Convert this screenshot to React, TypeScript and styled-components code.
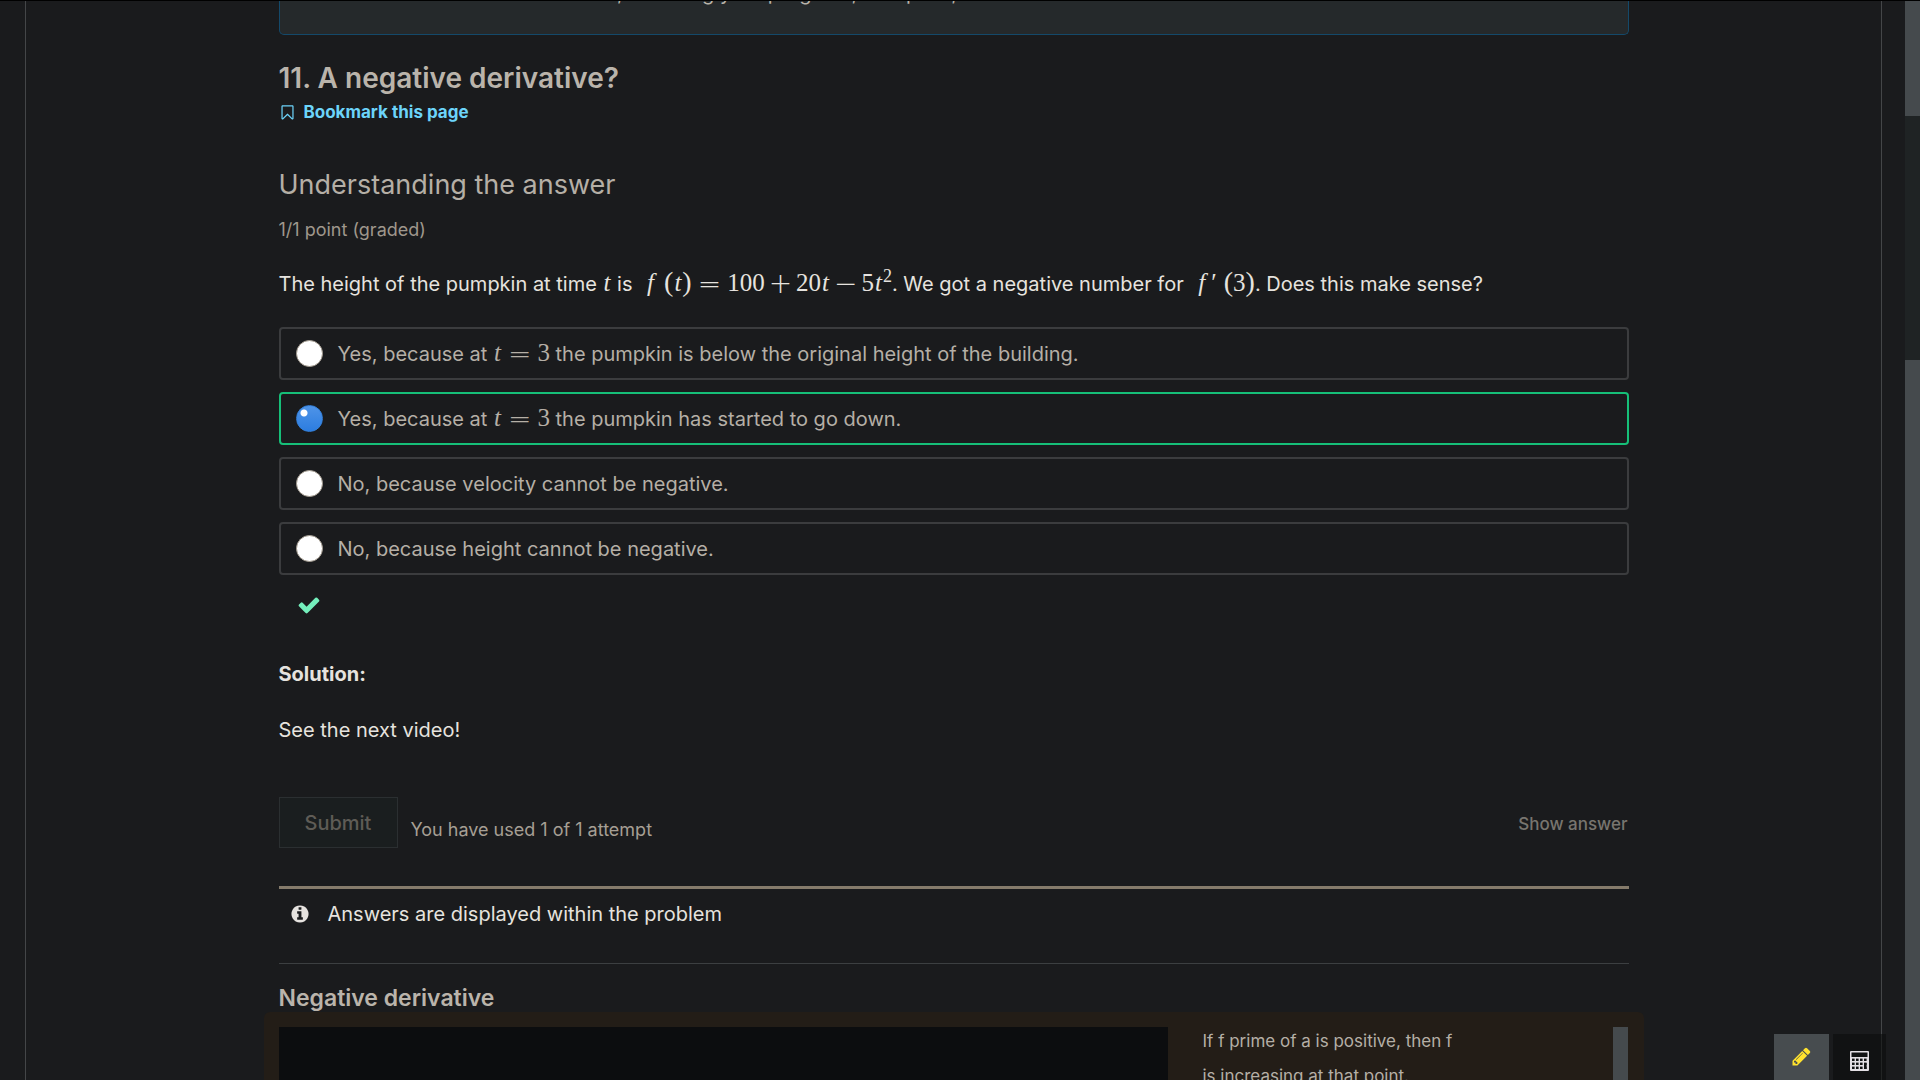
import React, { useState } from "react";
import styled, { createGlobalStyle } from "styled-components";

const Global = createGlobalStyle`
  * { box-sizing: border-box; }
  body {
    margin: 0;
    background: #1a1b1d;
    color: #e6e3df;
    font-family: Inter, "Liberation Sans", sans-serif;
    font-size: 20px;
    line-height: 28px;
  }
  h2, h3, h4, p, fieldset { margin: 0; padding: 0; border: 0; font-size: inherit; }
`;

const Window = styled.div`
  display: flex;
  height: 100vh;
  overflow: hidden;
  border-top: 1px solid #000;
`;

const Page = styled.div`
  flex: 1;
  min-width: 0;
  padding: 0 23px 0 25px;
`;

const Frame = styled.main`
  display: flex;
  justify-content: center;
  height: 100%;
  overflow: hidden;
  border: solid #444648;
  border-width: 0 1px;
`;

const Column = styled.div`
  width: 100%;
  max-width: 1350px;
`;

const Notice = styled.div`
  height: 34px;
  padding: 0 24px;
  overflow: hidden;
  display: flex;
  align-items: flex-start;
  border: 1px solid #14496a;
  border-top: 0;
  border-radius: 0 0 5px 5px;
  background: #25292b;
  color: #b9b3a9;
  p { margin-top: -20px; line-height: 24px; }
`;

const UnitTitle = styled.h2`
  margin-top: 25px;
  font-size: 28px;
  line-height: 36px;
  font-weight: 600;
  color: #bab4ab;
`;

const Bookmark = styled.button`
  display: flex;
  align-items: center;
  gap: 8px;
  margin: 3px 0 0;
  padding: 0;
  border: 0;
  background: none;
  color: #6cd4fa;
  font: 700 17px/26px Inter, sans-serif;
`;

const ProblemTitle = styled.h3`
  margin-top: 42px;
  font-size: 27px;
  line-height: 36px;
  font-weight: 400;
  color: #b5afa6;
`;

const Progress = styled.p`
  margin-top: 15px;
  font-size: 18px;
  line-height: 24px;
  color: #9f978c;
`;

const Question = styled.p`
  margin-top: 26px;
  line-height: 32px;
`;

const Maths = styled.span<{ $lead?: boolean }>`
  font: 25px/28px "Liberation Serif", serif;
  white-space: nowrap;
  margin-left: ${(p) => (p.$lead ? 9 : 0)}px;
  sup { font-size: 18px; line-height: 0; vertical-align: 9px; }
`;

const Var = styled.i`
  padding: 0 1px;
`;

const Op = styled.span<{ $binary?: boolean }>`
  margin: 0 ${(p) => (p.$binary ? 4 : 6)}px;
  font: 200 28px/0 "DejaVu Sans Light", "DejaVu Sans", sans-serif;
  vertical-align: -2px;
`;

const Paren = styled.span`
  font-size: 28px;
  line-height: 0;
`;

const Args = styled.span<{ $primed?: boolean }>`
  margin-left: ${(p) => (p.$primed ? 7 : 10)}px;
`;

const Prime = styled.span`
  margin-left: 6px;
`;

const Choices = styled.fieldset`
  display: flex;
  flex-direction: column;
  gap: 12px;
  margin-top: 27px;
`;

const Choice = styled.label<{ $correct?: boolean }>`
  display: flex;
  align-items: center;
  gap: 15px;
  height: 53px;
  padding: 0 15px;
  border: 2px solid ${(p) => (p.$correct ? "#16bf78" : "#3b3c3e")};
  border-radius: 4px;
  color: #b5afa6;
`;

const Radio = styled.input`
  appearance: none;
  width: 27px;
  height: 27px;
  margin: 0;
  border: 1px solid #a39b8f;
  border-radius: 50%;
  background: #fff;
  &:checked {
    border-color: #3381dc;
    background:
      radial-gradient(circle at 7px 7px, #fff 3px, transparent 4px),
      linear-gradient(#4f94e8, #2c7de0);
  }
`;

const Status = styled.div`
  display: flex;
  margin: 18px 0 0 18px;
  color: #74efbc;
`;

const Solution = styled.section`
  margin-top: 43px;
  p + p { margin-top: 28px; }
`;

const Actions = styled.div`
  display: flex;
  align-items: center;
  margin-top: 53px;
`;

const Submit = styled.button`
  height: 51px;
  padding: 0 26px 0 25px;
  border: 1px solid #2b2f31;
  background: #1a1e1f;
  color: #5f5c56;
  font: 500 20px/28px Inter, sans-serif;
`;

const Attempts = styled.span`
  margin: 14px 0 0 12px;
  font-size: 18px;
  line-height: 24px;
  color: #a69f94;
`;

const ShowAnswer = styled.button`
  margin-left: auto;
  padding: 2px 1px 0;
  border: 0;
  background: none;
  color: #78756f;
  font: 500 17px/28px Inter, sans-serif;
`;

const Message = styled.div`
  display: flex;
  align-items: center;
  gap: 18px;
  margin-top: 38px;
  padding: 11px 11px 35px;
  border-top: 3px solid #857b6b;
  border-bottom: 1px solid #3c3f41;
`;

const VideoTitle = styled.h3`
  margin-top: 20px;
  font-size: 23px;
  line-height: 28px;
  font-weight: 600;
  color: #bab4ab;
`;

const VideoBlock = styled.div`
  display: grid;
  grid-template-columns: 889fr 461fr;
  height: 600px;
  margin: 0 -15px;
  padding: 15px;
  border-radius: 6px;
  background: #231d17;
`;

const Player = styled.div`
  background: #0c0d0f;
`;

const Transcript = styled.div`
  display: flex;
  justify-content: space-between;
  padding-left: 35px;
  font-size: 17px;
  line-height: 35px;
  color: #b5afa6;
`;

const Lines = styled.div`
  max-width: 300px;
  margin-top: -3px;
`;

const Thumb = styled.div<{ $size: number }>`
  flex: ${(p) => p.$size};
  width: 15px;
  background: #454a4d;
`;

const Scrollbar = styled.div`
  display: flex;
  flex-direction: column;
  background: #1f2324;
`;

const TrackGap = styled.div`
  flex: 244;
`;

const TranscriptBar = styled(Scrollbar)`
  margin-right: 1px;
`;

const Tools = styled.div`
  position: fixed;
  right: 34px;
  bottom: 0;
  display: flex;
  gap: 4px;
`;

const Tool = styled.button<{ $active?: boolean }>`
  display: flex;
  justify-content: center;
  align-items: flex-start;
  width: ${(p) => (p.$active ? 55 : 53)}px;
  height: 46px;
  padding: ${(p) => (p.$active ? 12 : 17)}px 0 0;
  border: 0;
  background: ${(p) => (p.$active ? "#474c4f" : "rgba(12, 13, 14, 0.6)")};
  color: ${(p) => (p.$active ? "#ffe22e" : "#e6e3df")};
`;

const Icon = ({ d, size }: { d: string; size: number }) => (
  <svg width={size} height={size} viewBox="0 0 1792 1792" fill="currentColor" aria-hidden="true">
    <path d={d} />
  </svg>
);

const paths = {
  bookmark:
    "M1408 256h-1024v1242l423-406 89-85 89 85 423 406v-1242zm12-128q23 0 44 9 33 13 52.5 41t19.5 62v1289q0 34-19.5 62t-52.5 41q-19 8-44 8-48 0-83-32l-441-424-441 424q-36 33-83 33-23 0-44-9-33-13-52.5-41t-19.5-62v-1289q0-34 19.5-62t52.5-41q21-9 44-9h1048z",
  check:
    "M1671 566q0 40-28 68l-724 724-136 136q-28 28-68 28t-68-28l-136-136-362-362q-28-28-28-68t28-68l136-136q28-28 68-28t68 28l294 295 656-657q28-28 68-28t68 28l136 136q28 28 28 68z",
  info:
    "M1152 1376v-160q0-14-9-23t-23-9h-96v-512q0-14-9-23t-23-9h-320q-14 0-23 9t-9 23v160q0 14 9 23t23 9h96v320h-96q-14 0-23 9t-9 23v160q0 14 9 23t23 9h448q14 0 23-9t9-23zm-128-896v-160q0-14-9-23t-23-9h-192q-14 0-23 9t-9 23v160q0 14 9 23t23 9h192q14 0 23-9t9-23zm640 416q0 209-103 385.5t-279.5 279.5-385.5 103-385.5-103-279.5-279.5-103-385.5 103-385.5 279.5-279.5 385.5-103 385.5 103 279.5 279.5 103 385.5z",
  pencil:
    "M491 1536l91-91-235-235-91 91v107h128v128h107zm523-928q0-22-22-22-10 0-17 7l-542 542q-7 7-7 17 0 22 22 22 10 0 17-7l542-542q7-7 7-17zm-54-192l416 416-832 832h-416v-416zm683 96q0 53-37 90l-166 166-416-416 166-165q36-38 90-38 53 0 91 38l235 234q37 39 37 91z",
};

const Calculator = () => (
  <svg width="19" height="20" viewBox="0 0 19 20" aria-hidden="true">
    <rect width="19" height="20" rx="1" fill="#e3dfe4" />
    <rect x="1.5" y="1.5" width="16" height="4.5" fill="#121314" />
    {[8, 12, 16].map((y) =>
      [2, 6, 10, 14].map((x) => (
        <rect key={`${x}-${y}`} x={x} y={y - 0.4} width="2.6" height="2.4" fill="#121314" />
      ))
    )}
    <rect x="14" y="12" width="2.6" height="6" fill="#121314" />
  </svg>
);

const TEquals3 = () => (
  <Maths>
    <Var>t</Var>
    <Op>=</Op>3
  </Maths>
);

const choices = [
  { text: <>Yes, because at <TEquals3 /> the pumpkin is below the original height of the building.</> },
  { text: <>Yes, because at <TEquals3 /> the pumpkin has started to go down.</>, correct: true },
  { text: <>No, because velocity cannot be negative.</> },
  { text: <>No, because height cannot be negative.</> },
];

export default function App() {
  const [picked, setPicked] = useState(1);
  return (
    <Window>
      <Global />
      <Page>
        <Frame>
          <Column>
            <Notice>
              <p>You lose all access to this course, including your progress, on Apr 15, 2022.</p>
            </Notice>
            <UnitTitle>11. A negative derivative?</UnitTitle>
            <Bookmark type="button">
              <Icon d={paths.bookmark} size={17} />
              Bookmark this page
            </Bookmark>
            <ProblemTitle>Understanding the answer</ProblemTitle>
            <Progress>1/1 point (graded)</Progress>
            <Question>
              The height of the pumpkin at time <Maths><Var>t</Var></Maths> is{" "}
              <Maths $lead>
                <i>f</i>
                <Args><Paren>(</Paren><Var>t</Var><Paren>)</Paren></Args>
                <Op>=</Op>100<Op $binary>+</Op>20<Var>t</Var><Op $binary>−</Op>5<Var>t</Var><sup>2</sup>
              </Maths>
              . We got a negative number for{" "}
              <Maths $lead>
                <i>f</i><Prime>′</Prime>
                <Args $primed><Paren>(</Paren>3<Paren>)</Paren></Args>
              </Maths>
              . Does this make sense?
            </Question>
            <Choices>
              {choices.map((c, i) => (
                <Choice key={i} $correct={c.correct}>
                  <Radio type="radio" name="answer" checked={picked === i} onChange={() => setPicked(i)} />
                  <span>{c.text}</span>
                </Choice>
              ))}
            </Choices>
            <Status>
              <Icon d={paths.check} size={24} />
            </Status>
            <Solution>
              <p><b>Solution:</b></p>
              <p>See the next video!</p>
            </Solution>
            <Actions>
              <Submit type="button" disabled>Submit</Submit>
              <Attempts>You have used 1 of 1 attempt</Attempts>
              <ShowAnswer type="button" disabled>Show answer</ShowAnswer>
            </Actions>
            <Message>
              <Icon d={paths.info} size={20} />
              Answers are displayed within the problem
            </Message>
            <VideoTitle>Negative derivative</VideoTitle>
            <VideoBlock>
              <Player />
              <Transcript>
                <Lines>
                  If f prime of a is positive, then f
                  <br />
                  is increasing at that point.
                </Lines>
                <TranscriptBar>
                  <Thumb $size={1} />
                </TranscriptBar>
              </Transcript>
            </VideoBlock>
          </Column>
        </Frame>
      </Page>
      <Scrollbar>
        <Thumb $size={115} />
        <TrackGap />
        <Thumb $size={720} />
      </Scrollbar>
      <Tools>
        <Tool type="button" $active aria-label="Notes">
          <Icon d={paths.pencil} size={21} />
        </Tool>
        <Tool type="button" aria-label="Calculator">
          <Calculator />
        </Tool>
      </Tools>
    </Window>
  );
}
